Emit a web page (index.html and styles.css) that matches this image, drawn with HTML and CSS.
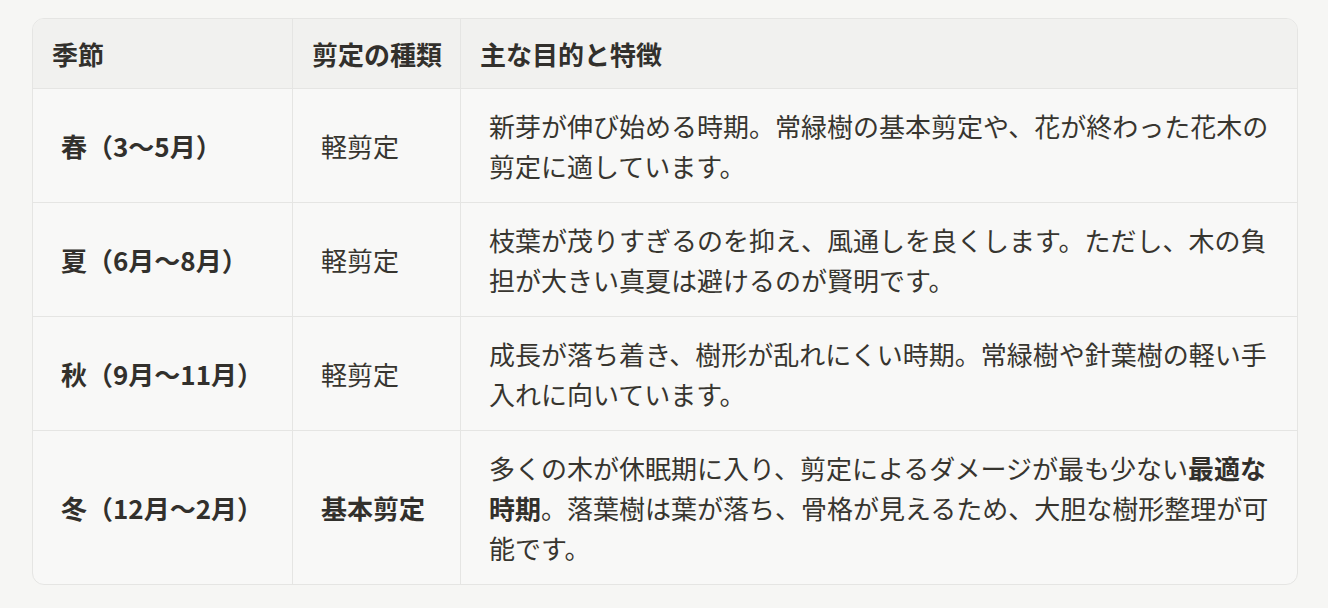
FILE: index.html
```html
<!DOCTYPE html>
<html lang="ja">
<head>
<meta charset="utf-8">
<title>剪定の時期</title>
<link rel="stylesheet" href="styles.css">
</head>
<body>
<div class="page">
  <div class="table-wrap">
    <table class="prune">
      <colgroup>
        <col class="c-season">
        <col class="c-type">
        <col class="c-desc">
      </colgroup>
      <thead>
        <tr>
          <th>季節</th>
          <th>剪定の種類</th>
          <th>主な目的と特徴</th>
        </tr>
      </thead>
      <tbody>
        <tr>
          <td class="season">春（3〜5月）</td>
          <td>軽剪定</td>
          <td class="desc">新芽が伸び始める時期。常緑樹の基本剪定や、花が終わった花木の剪定に適しています。</td>
        </tr>
        <tr>
          <td class="season">夏（6月〜8月）</td>
          <td>軽剪定</td>
          <td class="desc">枝葉が茂りすぎるのを抑え、風通しを良くします。ただし、木の負担が大きい真夏は避けるのが賢明です。</td>
        </tr>
        <tr>
          <td class="season">秋（9月〜11月）</td>
          <td>軽剪定</td>
          <td class="desc">成長が落ち着き、樹形が乱れにくい時期。常緑樹や針葉樹の軽い手入れに向いています。</td>
        </tr>
        <tr>
          <td class="season">冬（12月〜2月）</td>
          <td class="strong">基本剪定</td>
          <td class="desc">多くの木が休眠期に入り、剪定によるダメージが最も少ない<strong>最適な時期</strong>。落葉樹は葉が落ち、骨格が見えるため、大胆な樹形整理が可能です。</td>
        </tr>
      </tbody>
    </table>
  </div>
</div>
</body>
</html>
```
FILE: styles.css
```css
html, body {
  margin: 0;
  padding: 0;
  background: #f6f6f4;
}

body {
  font-family: "Noto Sans CJK JP", "Noto Sans", sans-serif;
  color: #37352f;
  font-size: 26px;
  line-height: 40px;
}

.page {
  padding: 18px 30px 0 32px;
}

.table-wrap {
  width: 1264px;
  border: 1px solid #e5e5e3;
  border-radius: 12px;
  overflow: hidden;
  background: #f8f8f7;
}

.prune {
  width: 100%;
  border-collapse: separate;
  border-spacing: 0;
  table-layout: fixed;
}

.c-season { width: 260px; }
.c-type { width: 168px; }

.prune th,
.prune td {
  text-align: left;
  vertical-align: middle;
  border-right: 1px solid #e5e5e3;
  border-bottom: 1px solid #e5e5e3;
}

.prune th:last-child,
.prune td:last-child {
  border-right: none;
}

.prune tbody tr:last-child td {
  border-bottom: none;
}

.prune th {
  background: #f1f1ef;
  font-weight: 700;
  padding: 14.5px 10px 14.5px 19px;
  color: #32302c;
}

.prune td {
  padding: 16.5px 20px 16.5px 28px;
  font-weight: 400;
}

.prune td.season,
.prune td.strong {
  font-weight: 700;
  color: #32302c;
}

.prune td.desc strong {
  font-weight: 700;
  color: #32302c;
}
```
